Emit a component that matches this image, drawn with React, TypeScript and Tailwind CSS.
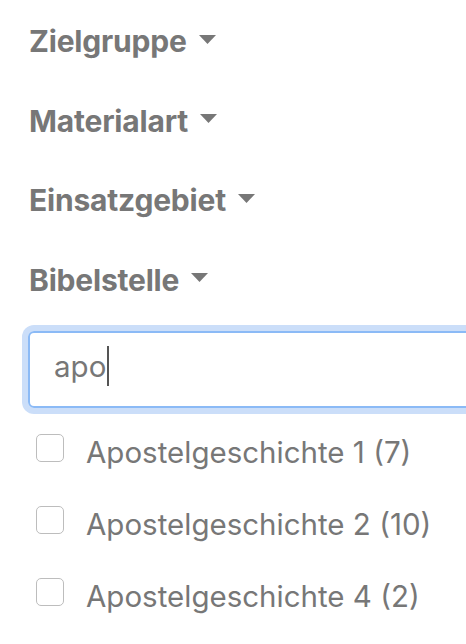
import React from "react";

const Caret = () => (
  <svg width="17" height="9" viewBox="0 0 17 9" className="ml-[12px] mb-[4px]">
    <polygon points="0,0 17,0 8.5,9" fill="#777777" />
  </svg>
);

const Heading = ({ label }: { label: string }) => (
  <div className="flex h-[40px] items-center">
    <span className="text-[30px] font-bold leading-none tracking-[-0.2px] text-[#777777]">{label}</span>
    <Caret />
  </div>
);

const items = ["Apostelgeschichte 1 (7)", "Apostelgeschichte 2 (10)", "Apostelgeschichte 4 (2)"];

export default function App() {
  return (
    <div
      className="h-[644px] w-[466px] overflow-hidden bg-white pl-[28px] pt-[21px]"
      style={{ fontFamily: "Inter, 'Noto Sans', sans-serif" }}
    >
      <div className="flex flex-col gap-[39.5px] pl-[1px]">
        <Heading label="Zielgruppe" />
        <Heading label="Materialart" />
        <Heading label="Einsatzgebiet" />
        <Heading label="Bibelstelle" />
      </div>
      <div className="mt-[31px] flex h-[77px] w-[460px] items-center rounded-[6px] border-2 border-[#8bbaf6] pl-[24px] shadow-[0_0_0_6px_#cbdef9]">
        <span className="mb-[4px] text-[29.5px] leading-none text-[#777777]">apo</span>
        <span className="mb-[7px] ml-[1px] h-[40px] w-[2px] bg-[#555555]" />
      </div>
      <div className="mt-[26px] flex flex-col gap-[44px] pl-[8px]">
        {items.map((t) => (
          <div key={t} className="flex h-[28px] items-center">
            <span className="h-[28px] w-[28px] shrink-0 rounded-[5px] border-[1.5px] border-[#bdbdbd] bg-white" />
            <span className="ml-[22px] mt-[10px] whitespace-nowrap text-[29.5px] leading-none text-[#777777]">{t}</span>
          </div>
        ))}
      </div>
    </div>
  );
}
